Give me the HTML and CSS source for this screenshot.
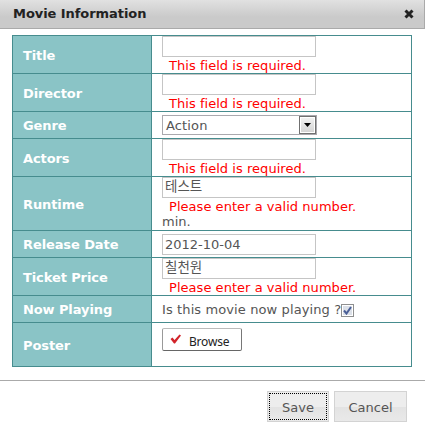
FILE: index.html
```html
<!DOCTYPE html>
<html lang="en">
<head>
<meta charset="utf-8">
<title>Movie Information</title>
<link rel="stylesheet" href="styles.css">
</head>
<body>
<main class="dialog">
  <header class="titlebar">
    <h1 class="w-head">Movie Information</h1>
    <svg class="close" width="10" height="10" viewBox="0 0 10 10"><path d="M1.5 1.5l7 7M8.5 1.5l-7 7" stroke="#222" stroke-width="3"/></svg>
  </header>
  <div class="form">
    <div class="row tall"><div class="label">Title</div><div class="value"><div class="field"></div><p class="error">This field is required.</p></div></div>
    <div class="row tall"><div class="label">Director</div><div class="value"><div class="field"></div><p class="error">This field is required.</p></div></div>
    <div class="row"><div class="label">Genre</div><div class="value center"><div class="select"><span>Action</span><i class="drop"><svg width="7" height="4" viewBox="0 0 7 4"><path d="M0 0h7L3.5 4z"/></svg></i></div></div></div>
    <div class="row tall"><div class="label">Actors</div><div class="value"><div class="field"></div><p class="error">This field is required.</p></div></div>
    <div class="row runtime"><div class="label">Runtime</div><div class="value"><div class="field korean">테스트</div><p class="error number">Please enter a valid number.</p><p class="unit">min.</p></div></div>
    <div class="row"><div class="label">Release Date</div><div class="value center"><div class="field date">2012-10-04</div></div></div>
    <div class="row tall"><div class="label">Ticket Price</div><div class="value"><div class="field korean">칠천원</div><p class="error number">Please enter a valid number.</p></div></div>
    <div class="row"><div class="label">Now Playing</div><div class="value playing"><span>Is this movie now playing ?</span><i class="check"><svg width="9" height="9" viewBox="0 0 9 9"><path d="M1 4.5l2.5 3L8 1" fill="none" stroke="#4a5f97" stroke-width="2"/></svg></i></div></div>
    <div class="row poster"><div class="label">Poster</div><div class="value"><div class="browse"><svg width="12" height="10" viewBox="0 0 12 10"><path d="M0.5 5L2.5 3.5 4.5 6 9.5 0.5 11 1.5 5 9.5H4z" fill="#d2232a"/></svg><span>Browse</span></div></div></div>
  </div>
  <footer class="actions">
    <div class="button save"><span>Save</span></div>
    <div class="button cancel"><span>Cancel</span></div>
  </footer>
</main>
</body>
</html>
```
FILE: styles.css
```css
* { box-sizing: border-box; }
body { margin: 0; background: #fff; overflow: hidden; font: 13px/16px "DejaVu Sans", sans-serif; color: #555; }
p, h1 { margin: 0; white-space: nowrap; }
i { font-style: normal; }
.titlebar { width: 425px; height: 29px; padding: 0 10px 1px 13px; display: flex; align-items: center; justify-content: space-between; background: linear-gradient(#e1e1e1, #cacaca 60%); border: solid #aaa; border-width: 0 1px 1px 0; }
.titlebar h1 { font-size: 13px; line-height: 16px; color: #222; letter-spacing: -0.06px; }
.form { width: 400px; margin: 6px 0 0 12px; border: 1px solid #468c8e; border-bottom: 0; }
.row { display: flex; height: 27px; border-bottom: 1px solid #468c8e; }
.tall { height: 38px; }
.runtime { height: 54px; }
.poster { height: 44px; }
.label { width: 139px; padding: 2px 0 0 10px; display: flex; align-items: center; background: #8ac4c6; border-right: 1px solid #468c8e; color: #fff; font-weight: bold; letter-spacing: -0.1px; white-space: nowrap; }
.value { flex: 1; padding-left: 10px; }
.field { width: 154px; height: 21px; border: 1px solid #c5c5c5; padding: 2px 2px 0; background: #fff; }
.korean { font: 13.5px/15px "Noto Sans CJK KR", sans-serif; padding-top: 0; }
.error { height: 16px; padding-left: 7px; line-height: 17px; color: #f00; letter-spacing: 0.04px; }
.unit { line-height: 16px; }
.center { padding-top: 3px; }
.select { width: 155px; height: 20px; display: flex; justify-content: space-between; border: 1px solid #aaa9ae; padding-left: 3px; line-height: 19px; letter-spacing: 0.15px; }
.drop { width: 17px; height: 18px; display: flex; align-items: center; justify-content: center; border: 1px solid #707070; box-shadow: inset 0 0 0 1px #fff; background: linear-gradient(#f3f3f3, #d2d2d2); }
.playing { display: flex; align-items: center; padding-top: 2px; white-space: nowrap; letter-spacing: 0.11px; }
.check { width: 13px; height: 13px; margin-top: 1px; display: flex; align-items: center; justify-content: center; border: 1px solid #8e8f8f; box-shadow: inset 0 0 0 1px #fff; background: #dbe0e8; }
.browse { width: 80px; height: 23px; margin-top: 5px; padding: 4px 0 0 7px; display: flex; align-items: center; gap: 7px; border: 1px solid #aaa; border-color: #bbb #777 #666 #999; border-radius: 2px; font: 12px/16px "Noto Sans", sans-serif; letter-spacing: -0.2px; color: #222; }
.browse svg { margin-top: -5px; }
.actions { width: 425px; margin-top: 13px; padding: 10px 18px 0 0; border-top: 1px solid #aaa; display: flex; justify-content: flex-end; gap: 5px; }
.button { height: 31px; border: 1px solid #d3d3d3; padding: 1px; background: linear-gradient(#ededed 50%, #e3e3e3 51%, #e9e9e9); }
.button span { display: flex; height: 100%; align-items: center; justify-content: center; padding-top: 2px; }
.save { width: 62px; }
.save span { border: 1px dotted #000; }
.cancel { width: 73px; }
```
